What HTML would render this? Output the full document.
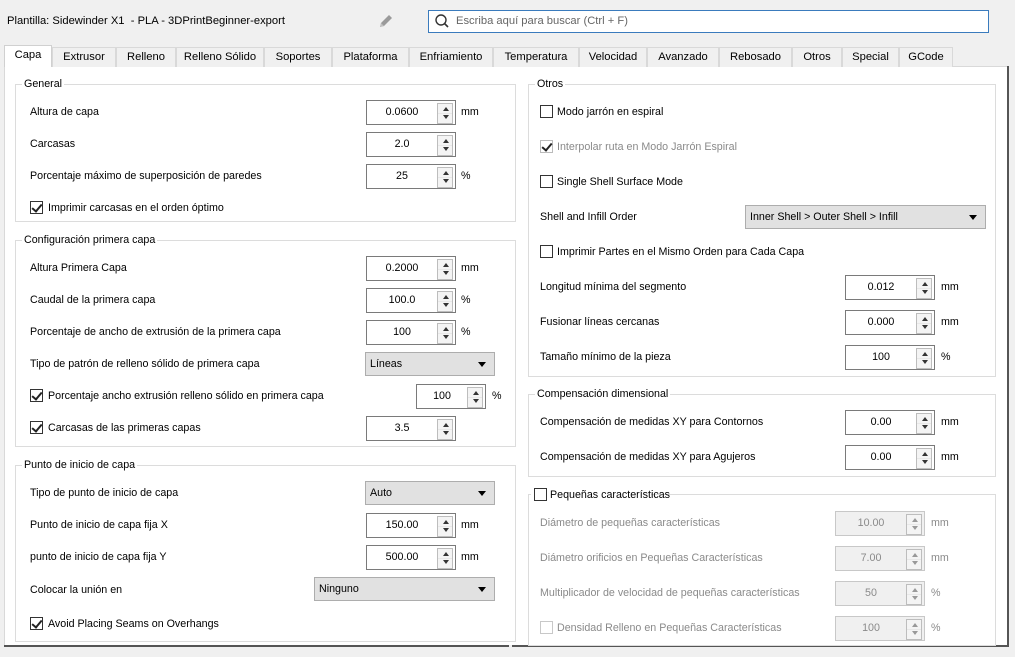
<!DOCTYPE html><html><head><meta charset="utf-8"><style>
*{box-sizing:border-box}
body{margin:0;width:1015px;height:657px;background:#f0f0f0;font-family:"Liberation Sans",sans-serif;font-size:10.7px;color:#000;position:relative;overflow:hidden}
.a{position:absolute;white-space:nowrap}
.tab{position:absolute;top:47px;height:20px;border:1px solid #d9d9d9;border-bottom:none;background:#f0f0f0;text-align:center;line-height:18px;font-size:11.2px}
.grp{position:absolute;border:1px solid #dcdcdc}
.gt{position:absolute;top:-8px;left:6px;background:#fff;padding:0 2px;line-height:14px}
.sp{position:absolute;width:90px;height:25px;border:1px solid #7a7a7a;background:#fff;text-align:center;line-height:23px;padding-right:18px}
.sp::after{content:"";position:absolute;right:2px;top:2px;width:14px;height:19px;border:1px solid #bdbdbd;background:linear-gradient(#e8e8e8,#e8e8e8) 0 9px/100% 1px no-repeat,#f4f4f4}
.sp i,.sp b{position:absolute;right:6px;width:0;height:0;border-left:3px solid transparent;border-right:3px solid transparent;z-index:1}
.sp i{top:6px;border-bottom:4px solid #333}.sp b{top:14px;border-top:4px solid #333}
.dis{color:#8a8a8a;border-color:#c8c8c8;background:#f0f0f0}
.dis i{border-bottom-color:#999}.dis b{border-top-color:#999}
.cb{position:absolute;width:13px;height:13px;border:1px solid #333;background:#fff}
.cb.on::after{content:"";position:absolute;left:3px;top:0px;width:4px;height:8px;border:solid #222;border-width:0 2px 2px 0;transform:rotate(40deg)}
.dd{position:absolute;height:24px;border:1px solid #adadad;background:#e1e1e1;line-height:22px;padding-left:4px}
.dd::after{content:"";position:absolute;right:8px;top:9px;border-left:4px solid transparent;border-right:4px solid transparent;border-top:5px solid #000}
.u{position:absolute}
.g{color:#8a8a8a}
</style></head><body>
<div class="a" style="left:7px;top:15px;font-size:11.2px">Plantilla: Sidewinder X1&nbsp; - PLA - 3DPrintBeginner-export</div>
<svg class="a" style="left:377px;top:12px" width="18" height="18" viewBox="0 0 18 18"><path d="M3 15 L4 11 L12 3 L15 6 L7 14 Z" fill="#9a9a9a"/><path d="M3 15 L4 11 L7 14Z" fill="#c0c0c0"/></svg>
<div class="a" style="left:428px;top:10px;width:561px;height:23px;border:1px solid #3a7bbd;background:#fff"></div>
<svg class="a" style="left:434px;top:13px" width="16" height="16" viewBox="0 0 16 16"><circle cx="7" cy="7" r="5" fill="none" stroke="#333" stroke-width="1.4"/><path d="M10.5 10.5 L14 14" stroke="#333" stroke-width="1.6"/></svg>
<div class="a" style="left:456px;top:15px;color:#666;font-size:11.2px">Escriba aquí para buscar (Ctrl + F)</div>

<div class="a" style="left:4px;top:66px;width:1004px;height:580px;background:#fff;border:1px solid #d9d9d9"></div>
<div class="a" style="left:1007px;top:66px;width:2px;height:580px;background:#555"></div>
<div class="a" style="left:4px;top:645px;width:1005px;height:2px;background:#555"></div>
<div class="a" style="left:509px;top:645px;width:3px;height:12px;background:#f0f0f0"></div>

<div class="tab" style="left:4px;top:45px;width:48px;height:22px;background:#fff;border-color:#d0d0d0;z-index:2">Capa</div>
<div class="tab" style="left:52px;width:64px">Extrusor</div>
<div class="tab" style="left:116px;width:60px">Relleno</div>
<div class="tab" style="left:176px;width:88px">Relleno Sólido</div>
<div class="tab" style="left:264px;width:68px">Soportes</div>
<div class="tab" style="left:332px;width:77px">Plataforma</div>
<div class="tab" style="left:409px;width:84px">Enfriamiento</div>
<div class="tab" style="left:493px;width:86px">Temperatura</div>
<div class="tab" style="left:579px;width:68px">Velocidad</div>
<div class="tab" style="left:647px;width:72px">Avanzado</div>
<div class="tab" style="left:719px;width:73px">Rebosado</div>
<div class="tab" style="left:792px;width:50px">Otros</div>
<div class="tab" style="left:842px;width:57px">Special</div>
<div class="tab" style="left:899px;width:54px">GCode</div>

<div class="grp" style="left:15px;top:84px;width:501px;height:138px"><span class="gt">General</span></div>
<div class="a" style="left:30px;top:106px">Altura de capa</div>
<div class="sp" style="left:366px;top:100px">0.0600<i></i><b></b></div><div class="u" style="left:461px;top:106px">mm</div>
<div class="a" style="left:30px;top:138px">Carcasas</div>
<div class="sp" style="left:366px;top:132px">2.0<i></i><b></b></div>
<div class="a" style="left:30px;top:170px">Porcentaje máximo de superposición de paredes</div>
<div class="sp" style="left:366px;top:164px">25<i></i><b></b></div><div class="u" style="left:461px;top:170px">%</div>
<div class="cb on" style="left:30px;top:201px"></div><div class="a" style="left:48px;top:202px">Imprimir carcasas en el orden óptimo</div>

<div class="grp" style="left:15px;top:240px;width:501px;height:207px"><span class="gt">Configuración primera capa</span></div>
<div class="a" style="left:30px;top:262px">Altura Primera Capa</div>
<div class="sp" style="left:366px;top:256px">0.2000<i></i><b></b></div><div class="u" style="left:461px;top:262px">mm</div>
<div class="a" style="left:30px;top:294px">Caudal de la primera capa</div>
<div class="sp" style="left:366px;top:288px">100.0<i></i><b></b></div><div class="u" style="left:461px;top:294px">%</div>
<div class="a" style="left:30px;top:326px">Porcentaje de ancho de extrusión de la primera capa</div>
<div class="sp" style="left:366px;top:320px">100<i></i><b></b></div><div class="u" style="left:461px;top:326px">%</div>
<div class="a" style="left:30px;top:358px">Tipo de patrón de relleno sólido de primera capa</div>
<div class="dd" style="left:365px;top:352px;width:130px">Líneas</div>
<div class="cb on" style="left:30px;top:389px"></div><div class="a" style="left:48px;top:390px">Porcentaje ancho extrusión relleno sólido en primera capa</div>
<div class="sp" style="left:416px;top:384px;width:70px">100<i></i><b></b></div><div class="u" style="left:492px;top:390px">%</div>
<div class="cb on" style="left:30px;top:421px"></div><div class="a" style="left:48px;top:422px">Carcasas de las primeras capas</div>
<div class="sp" style="left:366px;top:416px">3.5<i></i><b></b></div>

<div class="grp" style="left:15px;top:465px;width:501px;height:177px"><span class="gt">Punto de inicio de capa</span></div>
<div class="a" style="left:30px;top:487px">Tipo de punto de inicio de capa</div>
<div class="dd" style="left:365px;top:481px;width:130px">Auto</div>
<div class="a" style="left:30px;top:519px">Punto de inicio de capa fija X</div>
<div class="sp" style="left:366px;top:513px">150.00<i></i><b></b></div><div class="u" style="left:461px;top:519px">mm</div>
<div class="a" style="left:30px;top:551px">punto de inicio de capa fija Y</div>
<div class="sp" style="left:366px;top:545px">500.00<i></i><b></b></div><div class="u" style="left:461px;top:551px">mm</div>
<div class="a" style="left:30px;top:584px">Colocar la unión en</div>
<div class="dd" style="left:314px;top:577px;width:181px">Ninguno</div>
<div class="cb on" style="left:30px;top:617px"></div><div class="a" style="left:48px;top:618px">Avoid Placing Seams on Overhangs</div>

<div class="grp" style="left:528px;top:84px;width:468px;height:293px"><span class="gt">Otros</span></div>
<div class="cb" style="left:540px;top:105px"></div><div class="a" style="left:557px;top:106px">Modo jarrón en espiral</div>
<div class="cb on" style="left:540px;top:140px;border-color:#bbb"></div><div class="a g" style="left:557px;top:141px">Interpolar ruta en Modo Jarrón Espiral</div>
<div class="cb" style="left:540px;top:175px"></div><div class="a" style="left:557px;top:176px">Single Shell Surface Mode</div>
<div class="a" style="left:540px;top:211px">Shell and Infill Order</div>
<div class="dd" style="left:745px;top:205px;width:241px">Inner Shell &gt; Outer Shell &gt; Infill</div>
<div class="cb" style="left:540px;top:245px"></div><div class="a" style="left:557px;top:246px">Imprimir Partes en el Mismo Orden para Cada Capa</div>
<div class="a" style="left:540px;top:281px">Longitud mínima del segmento</div>
<div class="sp" style="left:845px;top:275px">0.012<i></i><b></b></div><div class="u" style="left:941px;top:281px">mm</div>
<div class="a" style="left:540px;top:316px">Fusionar líneas cercanas</div>
<div class="sp" style="left:845px;top:310px">0.000<i></i><b></b></div><div class="u" style="left:941px;top:316px">mm</div>
<div class="a" style="left:540px;top:351px">Tamaño mínimo de la pieza</div>
<div class="sp" style="left:845px;top:345px">100<i></i><b></b></div><div class="u" style="left:941px;top:351px">%</div>

<div class="grp" style="left:528px;top:394px;width:468px;height:83px"><span class="gt">Compensación dimensional</span></div>
<div class="a" style="left:540px;top:416px">Compensación de medidas XY para Contornos</div>
<div class="sp" style="left:845px;top:410px">0.00<i></i><b></b></div><div class="u" style="left:941px;top:416px">mm</div>
<div class="a" style="left:540px;top:451px">Compensación de medidas XY para Agujeros</div>
<div class="sp" style="left:845px;top:445px">0.00<i></i><b></b></div><div class="u" style="left:941px;top:451px">mm</div>

<div class="grp" style="left:528px;top:494px;width:468px;height:152px"></div>
<div class="a" style="left:531px;top:487px;background:#fff;width:120px;height:14px"></div>
<div class="cb" style="left:534px;top:488px"></div><div class="a" style="left:550px;top:489px">Pequeñas características</div>
<div class="a g" style="left:540px;top:517px">Diámetro de pequeñas características</div>
<div class="sp dis" style="left:835px;top:511px">10.00<i></i><b></b></div><div class="u g" style="left:931px;top:517px">mm</div>
<div class="a g" style="left:540px;top:552px">Diámetro orificios en Pequeñas Características</div>
<div class="sp dis" style="left:835px;top:546px">7.00<i></i><b></b></div><div class="u g" style="left:931px;top:552px">mm</div>
<div class="a g" style="left:540px;top:587px">Multiplicador de velocidad de pequeñas características</div>
<div class="sp dis" style="left:835px;top:581px">50<i></i><b></b></div><div class="u g" style="left:931px;top:587px">%</div>
<div class="cb" style="left:540px;top:621px;border-color:#c8c8c8"></div><div class="a g" style="left:557px;top:622px">Densidad Relleno en Pequeñas Características</div>
<div class="sp dis" style="left:835px;top:616px">100<i></i><b></b></div><div class="u g" style="left:931px;top:622px">%</div>
</body></html>
